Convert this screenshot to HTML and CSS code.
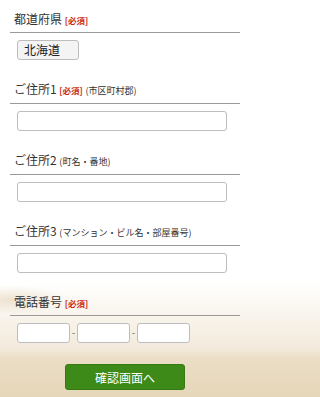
FILE: index.html
```html
<!DOCTYPE html>
<html lang="ja">
<head>
<meta charset="utf-8">
<meta name="viewport" content="width=device-width, initial-scale=1">
<link rel="stylesheet" href="styles.css">
</head>
<body>
<form class="form">
  <div class="field">
    <div class="label">都道府県 <span class="req">[必須]</span></div>
    <div class="select">北海道</div>
  </div>
  <div class="field">
    <div class="label">ご住所1 <span class="req">[必須]</span> <span class="note">(市区町村郡)</span></div>
    <div class="input"></div>
  </div>
  <div class="field">
    <div class="label">ご住所2 <span class="note">(町名・番地)</span></div>
    <div class="input"></div>
  </div>
  <div class="field">
    <div class="label">ご住所3 <span class="note">(マンション・ビル名・部屋番号)</span></div>
    <div class="input"></div>
  </div>
  <div class="field">
    <div class="label">電話番号 <span class="req">[必須]</span></div>
    <div class="tel">
      <div class="input small"></div>
      <span class="dash">-</span>
      <div class="input small"></div>
      <span class="dash">-</span>
      <div class="input small"></div>
    </div>
  </div>
  <div class="actions">
    <button type="button" class="submit">確認画面へ</button>
  </div>
</form>
</body>
</html>
```
FILE: styles.css
```css
html {
  height: 397px;
  background:
    radial-gradient(ellipse 60px 14px at 10px 300px, rgba(226, 208, 178, 0.55), rgba(226, 208, 178, 0) 100%),
    linear-gradient(to bottom, #ffffff 0, #ffffff 282px, #f8f3ea 320px, #f2e9da 350px, #ebdec6 358px, #e6d6b9 397px);
}
body {
  margin: 0;
  font-family: "Noto Sans CJK JP", "Noto Sans", sans-serif;
  color: #333;
}
.form {
  width: 250px;
  box-sizing: border-box;
  padding: 11px 10px 0;
  display: flex;
  flex-direction: column;
}
.field {
  margin-bottom: 21px;
}
.field:last-of-type {
  margin-bottom: 26px;
}
.label {
  font-size: 12px;
  line-height: 16px;
  padding: 0 0 4px 4px;
  border-bottom: 1px solid #9a9a9a;
  white-space: nowrap;
}
.req {
  color: #cc2a10;
  font-size: 8.5px;
  font-weight: bold;
}
.note {
  font-size: 9px;
  color: #333;
}
.select, .input {
  box-sizing: border-box;
  height: 20px;
  margin: 7px 0 0 7px;
  border: 1px solid #bdbdbd;
  border-radius: 3px;
  background: #fff;
}
.select {
  width: 62px;
  background: #f4f4f4;
  font-size: 12px;
  line-height: 18px;
  padding-left: 6px;
  color: #222;
}
.input {
  width: 210px;
}
.tel {
  display: flex;
  align-items: center;
  margin: 7px 0 0 7px;
}
.tel .input.small {
  width: 53px;
  margin: 0;
}
.dash {
  width: 7px;
  text-align: center;
  font-size: 9px;
  line-height: 20px;
  color: #555;
}
.actions {
  display: flex;
  justify-content: center;
}
.submit {
  width: 120px;
  height: 26px;
  border: 1px solid #357a12;
  border-radius: 3px;
  background: #3e8a18;
  color: #fff;
  font-family: "Noto Sans CJK JP", "Noto Sans", sans-serif;
  font-size: 12px;
  padding: 0;
}
```
